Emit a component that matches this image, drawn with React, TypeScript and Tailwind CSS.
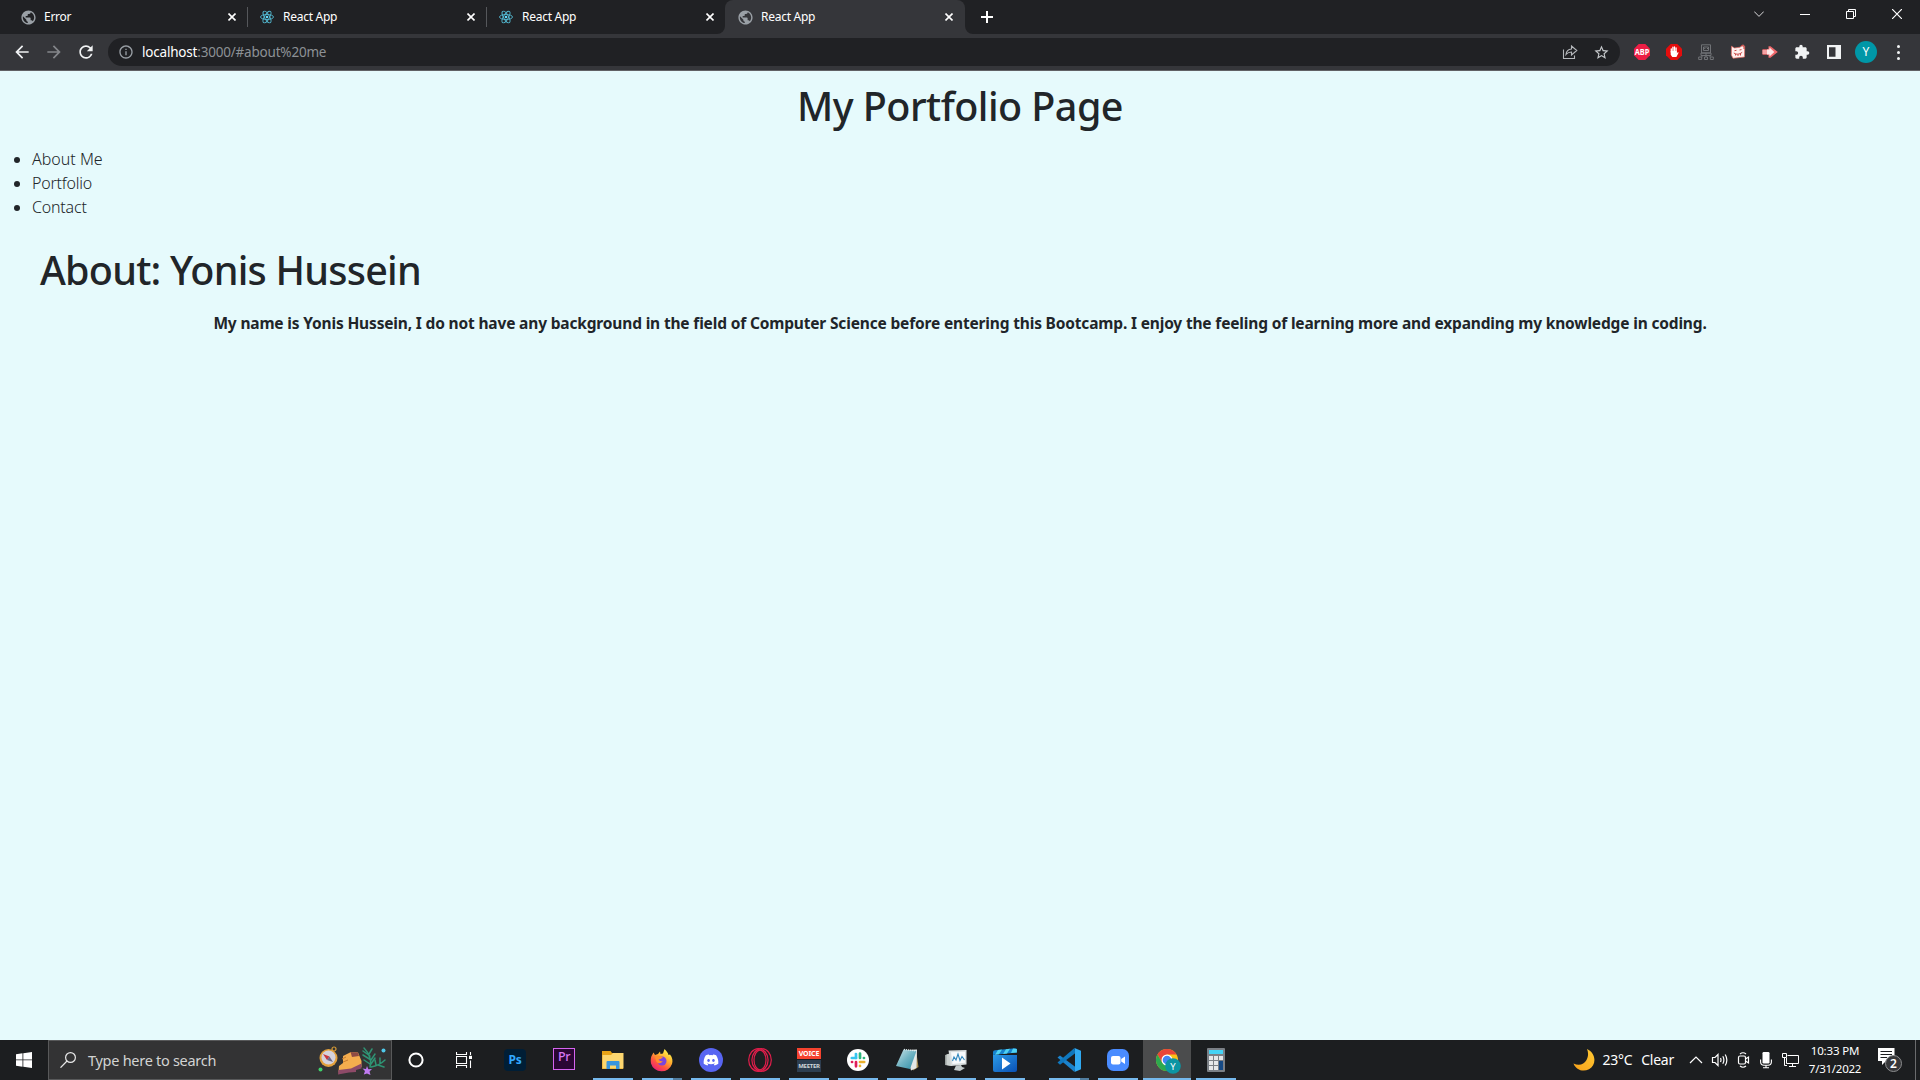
import React from "react";
import { FaDiscord } from "react-icons/fa";
import { MdExtension, MdPublic, MdStarBorder, MdRefresh, MdArrowBack, MdArrowForward, MdInfoOutline } from "react-icons/md";

type Kind = "globe" | "react";

function ReactLogo() {
  return (
    <svg width="14" height="14" viewBox="0 0 14 14" fill="none" stroke="#53b9d1" strokeWidth="0.9">
      <ellipse cx="7" cy="7" rx="6.5" ry="2.5" />
      <ellipse cx="7" cy="7" rx="6.5" ry="2.5" transform="rotate(60 7 7)" />
      <ellipse cx="7" cy="7" rx="6.5" ry="2.5" transform="rotate(120 7 7)" />
      <circle cx="7" cy="7" r="1.3" fill="#61dafb" stroke="none" />
    </svg>
  );
}

function CloseGlyph() {
  return (
    <svg width="8" height="8" viewBox="0 0 8 8" stroke="#fff" strokeWidth="1.6">
      <path d="M0.5 0.5L7.5 7.5M7.5 0.5L0.5 7.5" />
    </svg>
  );
}

function Tab({ title, kind, active, separator }: { title: string; kind: Kind; active?: boolean; separator?: boolean }) {
  return (
    <div className={active ? "relative flex h-[34px] w-[240px] items-center rounded-t-lg bg-[#35363a] pl-[13px] pr-[12px]" : "relative flex h-[34px] w-[239px] items-center pl-[13px] pr-[11px]"}>
      {active && (
        <>
          <svg className="absolute bottom-0 -left-2" width="8" height="8"><path d="M8 0V8H0A8 8 0 0 0 8 0Z" fill="#35363a" /></svg>
          <svg className="absolute bottom-0 -right-2" width="8" height="8"><path d="M0 0V8H8A8 8 0 0 1 0 0Z" fill="#35363a" /></svg>
        </>
      )}
      <span className="flex w-[14px] justify-center">
        {kind === "react" ? <ReactLogo /> : <MdPublic className="size-[17px] shrink-0 text-[#9aa0a6]" />}
      </span>
      <span className="ml-[9px] text-[12px] leading-[16px] tracking-[-0.27px] text-white">{title}</span>
      <span className="ml-auto"><CloseGlyph /></span>
      {separator && <span className="absolute -right-px top-[7px] h-5 w-px bg-[#55575b]" />}
    </div>
  );
}

function TabStrip() {
  return (
    <div className="flex h-[34px] bg-[#202124] pl-2">
      <Tab title="Error" kind="globe" separator />
      <Tab title="React App" kind="react" separator />
      <Tab title="React App" kind="react" />
      <Tab title="React App" kind="globe" active />
      <svg className="ml-4 mt-[11px]" width="12" height="12" viewBox="0 0 12 12" stroke="#fff" strokeWidth="2"><path d="M6 0V12M0 6H12" /></svg>
      <div className="ml-auto flex h-7 items-center gap-9 pr-[18px] text-white">
        <svg width="10" height="10" viewBox="0 0 10 10" fill="none" stroke="#d8d8da"><path d="M0.2 2.5L5 7.4L9.8 2.5" /></svg>
        <svg width="10" height="10" viewBox="0 0 10 10" stroke="#fff"><path d="M0 5.5H10" /></svg>
        <svg width="10" height="10" viewBox="0 0 10 10" fill="none" stroke="#fff"><path d="M0.5 2.5H7.5V9.5H0.5ZM2.5 2.5V0.5H9.5V7.5H7.5" /></svg>
        <svg width="10" height="10" viewBox="0 0 10 10" stroke="#fff" strokeWidth="1.2"><path d="M0 0L10 10M10 0L0 10" /></svg>
      </div>
    </div>
  );
}

function Extensions() {
  return (
    <div className="ml-[14px] flex items-center gap-4">
      <svg width="16" height="16" viewBox="0 0 16 16">
        <path d="M4.700 0H11.300L16 4.700V11.300L11.300 16H4.700L0 11.300V4.700Z" fill="#ed1e45" />
        <text x="8" y="11.100" textAnchor="middle" fontFamily="Noto Sans, sans-serif" fontSize="8.400" fontWeight="700" fill="#fff" textLength="14.600" lengthAdjust="spacingAndGlyphs">ABP</text>
      </svg>
      <svg width="16" height="16" viewBox="0 0 16 16">
        <path d="M4.700 0H11.300L16 4.700V11.300L11.300 16H4.700L0 11.300V4.700Z" fill="#e40d0d" />
        <path d="M5.300 4.800V8M6.900 3.200V8M8.500 3V8M10.100 4V9" stroke="#fff" strokeWidth="1.300" strokeLinecap="round" />
        <path d="M4.700 7H10.700V9.500L12 8L12.600 8.800L10.400 13H6.300L4.700 10.800Z" fill="#fff" />
      </svg>
      <svg width="16" height="16" viewBox="0 0 16 16" fill="none" stroke="#707276" strokeWidth="1">
        <path d="M3.500 0.800H12.500V9H3.500ZM5.500 3H10.500V6.500H5.500ZM3 9H13V11.500H3ZM4 11V13M8 9V13M12 11V13" />
        <path d="M6.500 4.500H7.200M9 4.500H9.700" stroke="#999" />
        <path d="M0.700 13H3.700V15.500H0.700ZM6.500 13H9.500V15.500H6.500ZM12.300 13H15.300V15.500H12.300Z" />
      </svg>
      <svg width="16" height="16" viewBox="0 0 16 16">
        <path d="M1.500 2.200L4.500 4L10 3.200L13 0.800L14.700 2.200L14.500 13L3 14.300L1.300 11Z" fill="#fff0ee" stroke="#e2675f" strokeWidth="0.700" />
        <path d="M4.500 6.700L6.500 6.300M9.500 6L11.500 5.600M3.800 9Q8 11.800 12.200 8.300M5.500 10V11.500M8 10.500V12M10.500 9.500V11.500" stroke="#c43835" strokeWidth="0.900" fill="none" />
        <path d="M11 1.700L14 2V5" stroke="#c43835" fill="none" />
      </svg>
      <svg width="16" height="16" viewBox="0 0 16 16">
        <path d="M0.500 5.300H6.500V2.200H8.500L15.800 8L8.500 13.800H6.500V10.700H0.500Z" fill="#f0686b" />
        <path d="M0.500 6H5V10H0.500Z" fill="#f5a0a2" />
        <path d="M5 5.500H7.500V3.500L12.300 8L7.500 12.500V10.500H5Z" fill="#fbe9e9" />
      </svg>
      <MdExtension className="size-4 text-[#f1f3f4]" />
      <svg width="16" height="16" viewBox="0 0 16 16"><path d="M1 1H15V15H1ZM3 3.300V12.700H9.500V3.300Z" fill="#f1f3f4" fillRule="evenodd" /></svg>
    </div>
  );
}

function Toolbar() {
  return (
    <div className="flex h-[36px] items-center bg-[#35363a] pl-[12px]">
      <MdArrowBack className="size-[20px] text-[#f1f3f4]" />
      <MdArrowForward className="ml-[12px] size-[20px] text-[#84868a]" />
      <MdRefresh className="ml-[12px] size-[20px] text-[#f1f3f4]" />
      <div className="ml-[12px] flex h-7 w-[1512px] items-center rounded-full bg-[#202124] pl-[10px] pr-[10px]">
        <MdInfoOutline className="size-4 text-[#9aa0a6]" />
        <div className="ml-2 flex text-[13.5px] leading-5">
          <span className="tracking-[-0.2px] text-white">localhost</span>
          <span className="tracking-[-0.2px] text-[#8d9196]">:3000/#about%20me</span>
        </div>
        <svg className="ml-auto" width="16" height="16" viewBox="0 0 16 16" fill="none" stroke="#b4b7bb" strokeWidth="1.1">
          <path d="M1.500 5.500V14.500H12.500V11.500" />
          <path d="M4 10.500C4.300 7.200 6.300 5.200 9.500 5V2L14.800 6.500L9.500 11V8C7.200 8 5.400 8.800 4 10.500Z" />
        </svg>
        <MdStarBorder className="ml-[15px] size-[17px] text-[#c4c7ca]" />
      </div>
      <Extensions />
      <span className="ml-[13px] flex size-[22px] items-center justify-center rounded-full bg-[#0097a7] text-[12px] text-white">Y</span>
      <span className="ml-[20px] flex flex-col gap-[3px]">
        <i className="size-[3px] rounded-full bg-[#f1f3f4]" />
        <i className="size-[3px] rounded-full bg-[#f1f3f4]" />
        <i className="size-[3px] rounded-full bg-[#f1f3f4]" />
      </span>
    </div>
  );
}

function Page() {
  return (
    <main className="flex-1 border-t border-[#606165] bg-[#e6fafc] text-[#212529]">
      <h1 className="mt-[11px] text-center text-[39.5px] font-medium leading-[48px] tracking-[-0.55px]">My Portfolio Page</h1>
      <ul className="mt-[17px] list-disc pl-8 text-[16px] font-[350] leading-6 tracking-[-0.2px]">
        <li className="tracking-normal">About Me</li>
        <li>Portfolio</li>
        <li>Contact</li>
      </ul>
      <section className="mt-[27px]">
        <h2 className="pl-[40px] text-[39.5px] font-medium leading-[48px] tracking-[-0.77px]">About: Yonis Hussein</h2>
        <p className="mt-[17px] whitespace-nowrap text-center text-[15.5px] font-bold leading-6 tracking-[-0.165px]">
          My name is Yonis Hussein, I do not have any background in the field of Computer Science before entering this Bootcamp. I enjoy the feeling of learning more and expanding my knowledge in coding.
        </p>
      </section>
    </main>
  );
}

function TaskButton({ children, state = "none" }: { children: React.ReactNode; state?: "none" | "open" | "multi" | "active" }) {
  return (
    <div className={state === "active" ? "relative flex h-10 w-12 items-center justify-center bg-[#4b4c4d]" : "relative flex h-10 w-12 items-center justify-center"}>
      {children}
      {state === "open" && <span className="absolute bottom-0 left-1 h-0.5 w-10 bg-[#76b9ed]" />}
      {state === "active" && <span className="absolute bottom-0 left-0 h-0.5 w-12 bg-[#76b9ed]" />}
      {state === "multi" && (
        <span className="absolute bottom-0 left-1 flex h-0.5 w-10"><i className="w-[31px] bg-[#76b9ed]" /><i className="w-[9px] bg-[#527ea0]" /></span>
      )}
    </div>
  );
}

function SearchArt() {
  return (
    <svg className="ml-auto" width="70" height="32" viewBox="0 0 70 32">
      <circle cx="16" cy="5" r="2" fill="none" stroke="#d69a35" strokeWidth="1.2" />
      <circle cx="10.500" cy="14" r="9" fill="#e3a13c" />
      <circle cx="10.500" cy="13.500" r="7" fill="#d5d3dc" />
      <path d="M5 10L11.500 12.500L9 16Z" fill="#c9363f" />
      <path d="M15 18L9 16L11.500 12.500Z" fill="#6d6a8c" />
      <circle cx="2.500" cy="25.500" r="2" fill="#3fd16c" />
      <path d="M25 12L33 8L40 8.500L43.500 17V23L33 27L20.500 28.500L21 22L25 19Z" fill="#f4ad4e" />
      <path d="M32.500 8L40 8.500L41 12L34 13Z" fill="#8e4b44" />
      <path d="M20.500 26L33 24.500L43.500 19.500V24.500L38 26V28L31 28.500L20 30.500Z" fill="#8d4a68" />
      <path d="M24 15L28 13M25 18L30 16" stroke="#c77b2e" />
      <g stroke="#2f9474" strokeWidth="1.500" fill="none" strokeLinecap="round">
        <path d="M52 23C54 17 51 9 46 4M52 20L46 16M53 16L45 11M52 12L45 7M53 20L57 14M53 16L57 10M51 10L54 5" />
        <path d="M53 23C59 22 64 19 67 16M58 21L57 16M62 19L62 14M60 21L66 23" />
      </g>
      <path d="M49 22L50.300 25.200L54 25L51.500 27.500L52.500 31L49 29.500L45.800 30.500L47 27L44.500 24.500L48 25Z" fill="#c07bf2" />
      <circle cx="65.500" cy="6.500" r="2" fill="#4fc8ea" />
    </svg>
  );
}

function Taskbar() {
  return (
    <footer className="flex h-10 bg-[#1c1e20] text-white">
      <div className="flex w-12 items-center justify-center">
        <svg width="16" height="16" viewBox="0 0 16 16" fill="#fff"><path d="M0 2.200L6.500 1.300V7.500H0ZM7.300 1.200L16 0V7.500H7.300ZM0 8.300H6.500V14.700L0 13.800ZM7.300 8.300H16V16L7.300 14.800Z" /></svg>
      </div>
      <div className="flex h-10 w-[344px] items-center border border-[#58595a] bg-[#333334] pl-[11px] pr-[3px]">
        <svg width="16" height="16" viewBox="0 0 16 16" fill="none" stroke="#e8e8e8" strokeWidth="1.200"><circle cx="10.500" cy="5.500" r="4.900" /><path d="M7 9L0.500 15.700" /></svg>
        <span className="ml-3 text-[14.5px] leading-5 tracking-[-0.28px] text-[#d2d3d3]">Type here to search</span>
        <SearchArt />
      </div>
      <TaskButton><svg width="16" height="16" viewBox="0 0 16 16"><circle cx="8" cy="8" r="6.600" fill="none" stroke="#fff" strokeWidth="2" /></svg></TaskButton>
      <TaskButton>
        <svg width="16" height="16" viewBox="0 0 16 16" fill="none" stroke="#fff" strokeWidth="1.100"><path d="M0.500 0V2.500H10.500V0M0.500 4.500H10.500V11.500H0.500ZM0.500 16V13.500H10.500V16M14.500 0V3M14.500 8.500V16" /><path d="M13 3.800H16V7H13Z" fill="#fff" stroke="none" /></svg>
      </TaskButton>
      <div className="ml-[3px] flex gap-px">
        <TaskButton>
          <span className="flex size-[22px] items-center justify-center rounded-[4px] bg-[#001e36] text-[12px] font-bold leading-none tracking-[-0.3px] text-[#31a8ff]">Ps</span>
        </TaskButton>
        <TaskButton>
          <span className="mb-[3px] flex size-[22px] items-center justify-center border border-[#d564f0] bg-[#2a0634] pb-[2px] text-[12.5px] font-medium leading-none tracking-[-0.4px] text-[#d977f5]">Pr</span>
        </TaskButton>
        <TaskButton state="open">
          <svg width="22" height="18" viewBox="0 0 22 18"><path d="M0 0H8.500L10 2H21V18H0Z" fill="#e8a317" /><path d="M0.500 4L9 4L11 2H21.500V17.500H0.500Z" fill="#fcd66f" /><path d="M4.500 11Q4.500 10 5.500 10H16.500Q17.500 10 17.500 11V18H14V14.500H8V18H4.500Z" fill="#3a96dd" /></svg>
        </TaskButton>
        <TaskButton state="multi">
          <svg width="24" height="24" viewBox="0 0 24 24">
            <defs>
              <linearGradient id="fx" x1="0.800" y1="0.100" x2="0.200" y2="1"><stop offset="0" stopColor="#fff04a" /><stop offset=".35" stopColor="#ffac2e" /><stop offset=".65" stopColor="#ff5540" /><stop offset="1" stopColor="#e6187f" /></linearGradient>
            </defs>
            <path d="M1.500 8L3.500 4.500L5 7L8 6L10 3.500L10.500 6L13 5.500L14.500 1C17 3.500 18 5 18.500 7L20 6.500C22.500 9.500 23 13 22 16A11 10.800 0 0 1 1 15.500C0.500 12 0.800 10 1.500 8Z" fill="url(#fx)" />
            <circle cx="12" cy="13" r="4.500" fill="#7a45dd" />
            <path d="M5 9Q9 6.500 13 9.500L10.500 11L8.500 11.500Q10 14 13 13Q10 17 6.500 14Z" fill="#ff8f2c" />
          </svg>
        </TaskButton>
        <TaskButton state="open">
          <span className="flex size-6 items-center justify-center rounded-full bg-[#5865f2]"><FaDiscord className="size-[16px]" /></span>
        </TaskButton>
        <TaskButton state="open">
          <svg width="24" height="24" viewBox="0 0 24 24" fill="none" stroke="#e01e4b" strokeWidth="1.200"><ellipse cx="10.400" cy="12" rx="9.700" ry="11.300" /><ellipse cx="13.600" cy="12" rx="9.700" ry="11.300" /><ellipse cx="12" cy="12" rx="6" ry="9.800" /></svg>
        </TaskButton>
        <TaskButton state="open">
          <div className="flex w-6 flex-col gap-px text-center font-bold text-white">
            <span className="flex h-[11px] items-center justify-center bg-[#f5432e] text-[7px] leading-[11px] tracking-[-0.1px]">VOICE</span>
            <span className="flex h-3 items-center justify-center bg-[#2d3e50] text-[6px] leading-[12px] tracking-[-0.25px] text-[#cfd5da]">MEETER</span>
          </div>
        </TaskButton>
        <TaskButton state="open">
          <svg width="22" height="22" viewBox="0 0 22 22" fill="none" strokeWidth="2.700" strokeLinecap="round">
            <circle cx="11" cy="11" r="11" fill="#fff" />
            <path d="M9 5V9M9 5H8.900" stroke="#36c5f0" /><path d="M4.800 9H9" stroke="#36c5f0" />
            <path d="M13 4.600V9M17 9H16.900" stroke="#2eb67d" />
            <path d="M13 13H17.200M13 17V16.900" stroke="#ecb22e" />
            <path d="M9 13V17.300M5 13H5.100" stroke="#e01e5a" />
          </svg>
        </TaskButton>
        <TaskButton state="open">
          <svg width="24" height="24" viewBox="0 0 24 24">
            <defs><linearGradient id="np" x1="0" y1="0" x2="1" y2="1"><stop offset="0" stopColor="#cfe6ea" /><stop offset=".5" stopColor="#6fb3c2" /><stop offset="1" stopColor="#2e8ea6" /></linearGradient></defs>
            <path d="M21 2L23.500 19L18 22.500Z" fill="#a98c4e" /><path d="M10 2L22 1.500L21.500 20L16 22.500Z" fill="#e4e8e7" /><path d="M8.500 1.500L21.500 3L15 21L1 18Z" fill="url(#np)" /><path d="M9 1.500L22 3" stroke="#dfe7e8" strokeWidth="1.300" strokeDasharray="1 1" />
          </svg>
        </TaskButton>
        <TaskButton state="open">
          <svg width="24" height="24" viewBox="0 0 24 24">
            <path d="M1 7L7 5.500V18L1 17Z" fill="#9aa19f" /><path d="M2.500 6.500L7 5V18L2.500 17Z" fill="#cbd1cf" />
            <path d="M4.500 2.500L22.500 2V16.500L7 18Z" fill="#d9dedf" /><path d="M7 4.300L21 3.800V14.800L8.500 16Z" fill="#f7fafc" />
            <path d="M8.500 13L10 9L12 12L14 6L16 12.500L18 8.500L20.500 12" stroke="#3187bd" strokeWidth="1.100" fill="none" />
            <path d="M12 17.500L17 17L18 19L21 20L16 23L10 22Z" fill="#c2c9ca" />
          </svg>
        </TaskButton>
        <TaskButton state="open">
          <svg width="24" height="24" viewBox="0 0 24 24">
            <defs><linearGradient id="mv" x1="0" y1="0" x2="1" y2="1"><stop offset="0" stopColor="#2b9be8" /><stop offset="1" stopColor="#0a50b4" /></linearGradient></defs>
            <path d="M0 7H24V22Q24 24 22 24H2Q0 24 0 22Z" fill="url(#mv)" />
            <path d="M0 4Q0 2.500 2 2.300L22 0.300Q24 0.300 24 2V4.500L0 7Z" fill="#1683d0" /><path d="M5 2L9 1.600L6 6.300L2 6.700ZM13 1.200L17 0.800L14 5.500L10 5.900ZM20 0.500L23.900 1V4.500L18 5.100Z" fill="#4fd2f2" />
            <path d="M9 9.500L17.500 15.500L9 21.500Z" fill="#fff" />
          </svg>
        </TaskButton>
      </div>
      <div className="ml-4 flex gap-px">
        <TaskButton state="multi">
          <svg width="24" height="24" viewBox="0 0 24 24"><path d="M0.500 9.500L3 7.500L18.500 19L17.500 24Z" fill="#1b83cc" /><path d="M17.500 0L0.500 14.500L3 16.700L18.500 5Z" fill="#0f78bf" /><path d="M17.500 0L24 2.800V21.200L17.500 24Q18 23.500 18 22.500V1.500Q18 0.500 17.500 0Z" fill="#30aaf2" /></svg>
        </TaskButton>
        <TaskButton state="open">
          <svg width="22" height="22" viewBox="0 0 22 22"><rect width="22" height="22" rx="6.500" fill="#4a8cff" /><rect x="4" y="7" width="9.500" height="8.500" rx="2" fill="#fff" /><path d="M14.200 10L18 7.500V15L14.200 12.500Z" fill="#fff" /></svg>
        </TaskButton>
        <TaskButton state="active">
          <svg className="ml-[2px] mt-[2px]" width="26" height="26" viewBox="0 0 26 26">
            <circle cx="12" cy="12" r="11" fill="#fbc116" />
            <path d="M12 6.500H21.530A11 11 0 0 0 2.470 6.500L7.200 14.700Z" fill="#e8453a" />
            <path d="M2.470 6.500A11 11 0 0 0 12 23L16.800 14.700L12 17.500L7.200 14.700Z" fill="#2da94f" />
            <circle cx="12" cy="12" r="5.500" fill="#fff" /><circle cx="12" cy="12" r="4.300" fill="#4285f4" />
            <circle cx="18" cy="18" r="7.800" fill="#0c95a3" />
            <text x="18" y="21.500" textAnchor="middle" fontFamily="Noto Sans, sans-serif" fontSize="9.500" fill="#fff">Y</text>
          </svg>
        </TaskButton>
        <TaskButton state="open">
          <svg width="18" height="24" viewBox="0 0 18 24"><rect width="18" height="24" rx="1" fill="#7b8086" /><rect x="2" y="2" width="14" height="4" fill="#45d3f5" /><path d="M2 8H6V12H2ZM7 8H11V12H7ZM12 8H16V12H12ZM2 13H6V17H2ZM7 13H11V17H7ZM2 18H6V22H2ZM7 18H11V22H7Z" fill="#e6e8ea" /><path d="M12 13H16V22H12Z" fill="#164a85" /></svg>
        </TaskButton>
      </div>
      <div className="ml-auto flex items-center">
        <svg width="22" height="22" viewBox="0 0 22 22"><defs><linearGradient id="mn" x1="1" y1="0" x2="0" y2="1"><stop offset="0" stopColor="#ffc933" /><stop offset="1" stopColor="#f7a11a" /></linearGradient></defs><path d="M14 0C23 4 24 16 16 20.300C10 23.300 3 21 0.500 14.500C6 17 11 15.500 13.500 11C15.500 7.500 15.500 3.500 14 0Z" fill="url(#mn)" /></svg>
        <span className="ml-2 text-[14px] leading-5 tracking-[-0.3px]">23°C</span>
        <span className="ml-[9px] text-[14px] leading-5 tracking-[-0.25px]">Clear</span>
        <svg className="ml-[15px]" width="14" height="8" viewBox="0 0 14 8" fill="none" stroke="#fff" strokeWidth="1.200"><path d="M1 7L7 1L13 7" /></svg>
        <svg className="ml-[8px]" width="18" height="16" viewBox="0 0 18 16" fill="none" stroke="#fff" strokeWidth="1.200"><path d="M1.500 5.500H4L7 2.500V13.500L4 10.500H1.500ZM9.500 6Q10.500 8 9.500 10M11.800 4.200Q14 8 11.800 11.800M14.200 2.500Q17.500 8 14.200 13.500" /></svg>
        <svg className="ml-[8px]" width="13" height="18" viewBox="0 0 13 18" fill="none" stroke="#fff" strokeWidth="1.200"><rect x="1.500" y="5" width="7" height="8" rx="1.500" /><path d="M8.500 8L11.500 6V12L8.500 10M3 3Q6 0.500 9 3M3 15Q6 17.500 9 15" /></svg>
        <svg className="ml-[10px]" width="12" height="18" viewBox="0 0 12 18" fill="none" stroke="#fff" strokeWidth="1.100"><rect x="2.500" y="1" width="7" height="11.500" rx="1.200" fill="#fff" stroke="none" /><path d="M0.600 8.500V11Q0.600 14 4 14.200H8Q11.400 14 11.400 11V8.500M6 14V16.500M3 16.800H9" /></svg>
        <svg className="ml-[10px]" width="17" height="16" viewBox="0 0 17 16" fill="none" stroke="#fff" strokeWidth="1"><path d="M5.500 3.500H16.500V11.500H4.500V6M10.500 11.500V14.500M7 14.500H14M0.500 1.500H4.500V5.500H0.500ZM2.500 5.500V13.500H5" /></svg>
        <div className="ml-[9px] flex w-[54px] flex-col items-center text-[11.5px] leading-[18px]">
          <span className="tracking-[-0.15px]">10:33 PM</span>
          <span className="tracking-[-0.25px]">7/31/2022</span>
        </div>
        <div className="relative ml-[16px] h-6 w-[26px]">
          <svg width="17" height="18" viewBox="0 0 17 18"><path d="M0 0H16.500V13H8L4 17V13H0Z" fill="#fff" /><path d="M2.500 3.500H14M2.500 6.500H14M2.500 9.500H9" stroke="#1c1e20" /></svg>
          <span className="absolute left-[7px] top-[7px] flex size-[17px] items-center justify-center rounded-full border border-[#8d8e90] bg-[#37383a] text-[12px] font-semibold leading-none">2</span>
        </div>
        <span className="ml-[11px] mr-1 h-10 w-px bg-[#6a6b6d]" />
      </div>
    </footer>
  );
}

export default function App() {
  return (
    <div className="flex h-[1080px] w-[1920px] flex-col overflow-hidden font-['Noto_Sans','Open_Sans',sans-serif]">
      <TabStrip />
      <Toolbar />
      <Page />
      <Taskbar />
    </div>
  );
}
